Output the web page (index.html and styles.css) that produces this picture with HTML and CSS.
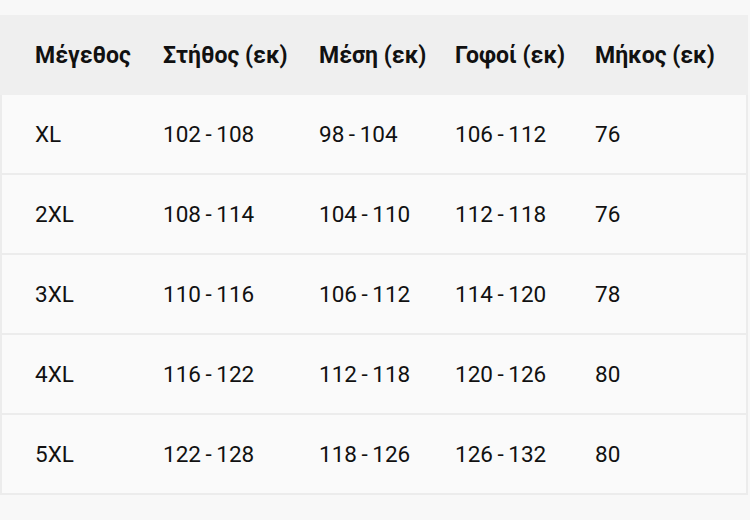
FILE: index.html
```html
<!DOCTYPE html>
<html lang="el">
<head>
<meta charset="utf-8">
<link rel="stylesheet" href="styles.css">
</head>
<body>
<div class="page">
  <div class="size-table">
    <div class="row head">
      <div class="cell">Μέγεθος</div>
      <div class="cell">Στήθος (εκ)</div>
      <div class="cell">Μέση (εκ)</div>
      <div class="cell">Γοφοί (εκ)</div>
      <div class="cell">Μήκος (εκ)</div>
    </div>
    <div class="row">
      <div class="cell">XL</div>
      <div class="cell">102 - 108</div>
      <div class="cell">98 - 104</div>
      <div class="cell">106 - 112</div>
      <div class="cell">76</div>
    </div>
    <div class="row">
      <div class="cell">2XL</div>
      <div class="cell">108 - 114</div>
      <div class="cell">104 - 110</div>
      <div class="cell">112 - 118</div>
      <div class="cell">76</div>
    </div>
    <div class="row">
      <div class="cell">3XL</div>
      <div class="cell">110 - 116</div>
      <div class="cell">106 - 112</div>
      <div class="cell">114 - 120</div>
      <div class="cell">78</div>
    </div>
    <div class="row">
      <div class="cell">4XL</div>
      <div class="cell">116 - 122</div>
      <div class="cell">112 - 118</div>
      <div class="cell">120 - 126</div>
      <div class="cell">80</div>
    </div>
    <div class="row">
      <div class="cell">5XL</div>
      <div class="cell">122 - 128</div>
      <div class="cell">118 - 126</div>
      <div class="cell">126 - 132</div>
      <div class="cell">80</div>
    </div>
  </div>
</div>
</body>
</html>
```

FILE: styles.css
```css
html, body {
  margin: 0;
  padding: 0;
  background: #f8f8f8;
}
body {
  font-family: Roboto, "Noto Sans", sans-serif;
  color: #111;
  width: 750px;
  height: 520px;
  overflow: hidden;
}
.page {
  padding-top: 15px;
}
.size-table {
  width: 748px;
  box-sizing: border-box;
  background: #fafafa;
  border-left: 2px solid #ececec;
  border-right: 2px solid #ececec;
}
.row {
  display: grid;
  grid-template-columns: 161px 156px 136px 140px 1fr;
  height: 80px;
  box-sizing: border-box;
  border-bottom: 2px solid #ececec;
  align-items: center;
  font-size: 22.5px;
  word-spacing: -1px;
}
.row .cell:first-child {
  padding-left: 33px;
}
.row.head {
  background: #efefef;
  font-weight: 700;
  font-size: 23px;
  word-spacing: 0;
  border-bottom: none;
  margin: 0 -2px;
  padding-left: 2px;
}
```
